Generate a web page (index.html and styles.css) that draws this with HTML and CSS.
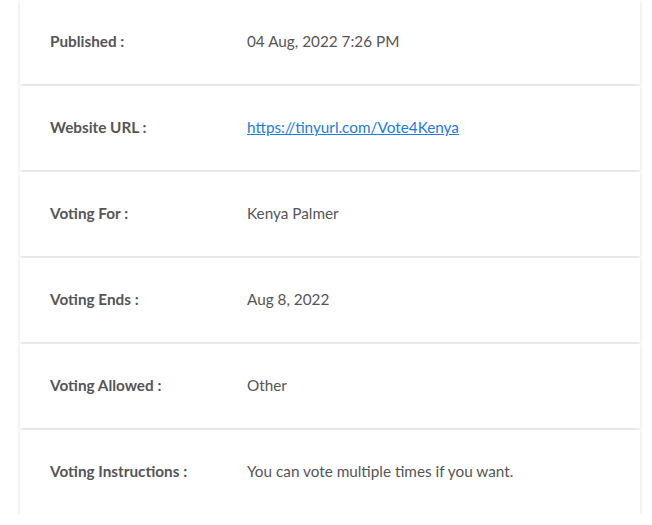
FILE: index.html
```html
<!DOCTYPE html>
<html>
<head>
<meta charset="utf-8">
<link rel="stylesheet" href="styles.css">
</head>
<body>
<div class="list">
  <div class="row"><div class="label">Published :</div><div class="value">04 Aug, 2022 7:26 PM</div></div>
  <div class="row"><div class="label">Website URL :</div><div class="value"><a href="#">https://tinyurl.com/Vote4Kenya</a></div></div>
  <div class="row"><div class="label">Voting For :</div><div class="value">Kenya Palmer</div></div>
  <div class="row"><div class="label">Voting Ends :</div><div class="value">Aug 8, 2022</div></div>
  <div class="row"><div class="label">Voting Allowed :</div><div class="value">Other</div></div>
  <div class="row"><div class="label">Voting Instructions :</div><div class="value">You can vote multiple times if you want.</div></div>
</div>
</body>
</html>
```
FILE: styles.css
```css
html, body { margin: 0; padding: 0; background: #fff; }
body { font-family: Lato, "Open Sans", sans-serif; color: #555; }
.list { display: flex; flex-direction: column; gap: 2px; margin: 0 12px 0 20px; }
.row {
  display: flex;
  align-items: center;
  height: 84px;
  padding: 0 30px 2px;
  box-sizing: border-box;
  background: #fff;
  box-shadow: 0 1px 4px rgba(0,0,0,0.14);
  font-size: 15.3px;
}
.label { width: 197px; flex: none; font-weight: 700; color: #555; }
.value { color: #555; }
.value a { color: #1e7be0; text-decoration: underline; }
```
